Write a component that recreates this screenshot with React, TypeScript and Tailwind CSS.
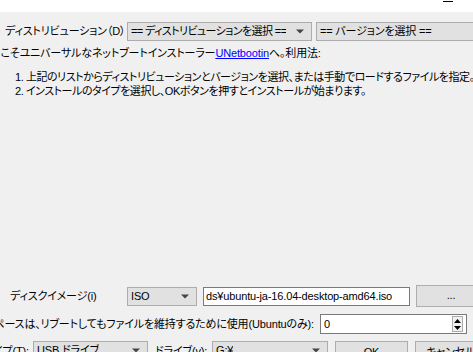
import React from "react";

const font = { fontFamily: "'Liberation Sans', 'Noto Sans CJK JP', sans-serif" };

function Arrow() {
  return (
    <svg width="8" height="5" viewBox="0 0 8 5" className="shrink-0">
      <path d="M0 0.5 H8 L4 4.5 Z" fill="#444" />
    </svg>
  );
}

function Select({ text, w, arrow = true, tight = false }: { text: string; w: string; arrow?: boolean; tight?: boolean }) {
  return (
    <div
      className={`${w} h-[19px] shrink-0 bg-[#e1e1e1] border border-[#adadad] flex items-center pl-[3px] pr-[7px] justify-between overflow-hidden`}
    >
      <span className={`whitespace-nowrap min-w-0 overflow-hidden ${tight ? "tracking-[-0.6px]" : ""}`}>{text}</span>
      {arrow && <Arrow />}
    </div>
  );
}

export default function App() {
  return (
    <div
      className="w-[473px] h-[352px] overflow-hidden bg-[#f0f0f0] text-[11px] tracking-[-0.15px] [font-feature-settings:'palt'] text-black leading-[13px]"
      style={font}
    >
      {/* title bar, mostly cut off */}
      <div className="h-[12px] bg-white relative overflow-hidden">
        <span className="absolute left-[5px] top-[-11px] text-[12px]">UNetbootin</span>
        <span className="absolute left-[443px] top-[1px] w-[10px] h-[1px] bg-black" />
      </div>

      {/* distribution row */}
      <div className="flex items-center mt-[10px] h-[19px]">
        <span className="w-[127px] shrink-0 pl-[5px] whitespace-nowrap overflow-hidden">ディストリビューション（D）</span>
        <Select text="== ディストリビューションを選択 ==" w="w-[185px]" tight />
        <div className="ml-[4px] w-[170px] shrink-0">
          <Select text="== バージョンを選択 ==" w="w-[170px]" arrow={false} />
        </div>
      </div>

      <div className="mt-[6px] -ml-[18px] whitespace-nowrap">
        ようこそユニバーサルなネットブートインストーラー
        <span className="text-[#0000ff] underline">UNetbootin</span>へ。利用法:
      </div>

      <div className="mt-[11px] pl-[15px] flex flex-col whitespace-nowrap tracking-[-0.45px]">
        <span className="h-[14px]">1. 上記のリストからディストリビューションとバージョンを選択、または手動でロードするファイルを指定。</span>
        <span className="h-[14px]">2. インストールのタイプを選択し、OKボタンを押すとインストールが始まります。</span>
      </div>

      {/* disk image row */}
      <div className="mt-[186px] flex items-center h-[22px]">
        <span className="w-[127px] shrink-0 pl-[10px] whitespace-nowrap">ディスクイメージ(i)</span>
        <Select text="ISO" w="w-[70px]" />
        <div className="ml-[6px] w-[207px] h-[19px] shrink-0 bg-white border border-[#7a7a7a] flex items-center pl-[2px] overflow-hidden whitespace-nowrap">
          ds¥ubuntu-ja-16.04-desktop-amd64.iso
        </div>
        <button className="ml-[6px] w-[70px] h-[22px] shrink-0 bg-[#e1e1e1] border border-[#adadad] flex items-end justify-center pb-[4px]">
          ...
        </button>
      </div>

      {/* persistence row */}
      <div className="mt-[7px] flex items-center h-[20px]">
        <div className="w-[320px] shrink-0 flex justify-end overflow-hidden whitespace-nowrap pr-[6px]">
          スペースは、リブートしてもファイルを維持するために使用(Ubuntuのみ):
        </div>
        <div className="w-[147px] h-[20px] shrink-0 bg-white border border-[#7a7a7a] flex items-center justify-between pl-[3px] pr-[3px]">
          <span>0</span>
          <div className="w-[11px] h-[16px] border border-[#adadad] bg-[#f0f0f0] flex flex-col items-center justify-around">
            <svg width="7" height="4" viewBox="0 0 7 4">
              <path d="M0 4 L3.5 0 L7 4 Z" fill="#000" />
            </svg>
            <svg width="7" height="4" viewBox="0 0 7 4">
              <path d="M0 0 L3.5 4 L7 0 Z" fill="#000" />
            </svg>
          </div>
        </div>
      </div>

      {/* bottom row */}
      <div className="mt-[7px] flex items-start h-[22px]">
        <div className="w-[33px] shrink-0 flex justify-end overflow-hidden whitespace-nowrap pr-[4px] pt-[4px]">
          タイプ(T):
        </div>
        <Select text="USB ドライブ" w="w-[115px]" />
        <span className="w-[64px] shrink-0 pl-[7px] pt-[4px] whitespace-nowrap overflow-hidden">ドライブ(v):</span>
        <Select text="G:¥" w="w-[116px]" />
        <button className="ml-[7px] w-[73px] h-[22px] shrink-0 bg-[#e1e1e1] border border-[#adadad]">
          OK
        </button>
        <button className="ml-[7px] w-[70px] h-[22px] shrink-0 bg-[#e1e1e1] border border-[#adadad] whitespace-nowrap text-left pl-[10px]">
          キャンセル
        </button>
      </div>
    </div>
  );
}
